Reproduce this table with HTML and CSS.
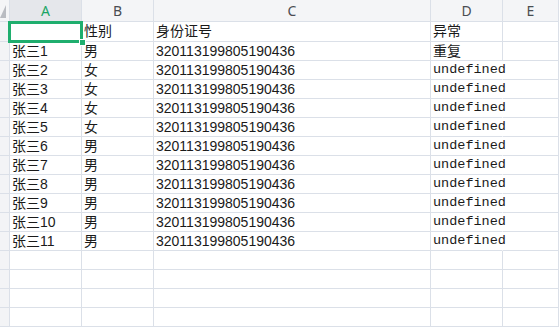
FILE: index.html
```html
<!DOCTYPE html>
<html lang="zh-CN">
<head>
    <meta charset="UTF-8">
    <meta name="viewport" content="width=device-width, initial-scale=1.0">
    <title>身份证号检查</title>
    <link rel="stylesheet" href="styles.css">
</head>
<body>
    <div class="sheet">
        <div class="row head">
            <div class="cell corner">
                <svg width="9" height="21" viewBox="0 0 9 21"><polygon points="6,5 6,18 0,18" fill="#b9bcc2"/></svg>
            </div>
            <div class="cell col active-col">A</div>
            <div class="cell col">B</div>
            <div class="cell col">C</div>
            <div class="cell col">D</div>
            <div class="cell col">E</div>
        </div>
        <div class="row first">
            <div class="cell num"></div>
            <div class="cell active"></div>
            <div class="cell">性别</div>
            <div class="cell">身份证号</div>
            <div class="cell">异常</div>
            <div class="cell"></div>
        </div>
        <div class="row">
            <div class="cell num"></div>
            <div class="cell">张三1</div>
            <div class="cell">男</div>
            <div class="cell">320113199805190436</div>
            <div class="cell">重复</div>
            <div class="cell"></div>
        </div>
        <div class="row">
            <div class="cell num"></div>
            <div class="cell">张三2</div>
            <div class="cell">女</div>
            <div class="cell">320113199805190436</div>
            <div class="cell spill">undefined</div>
            <div class="cell"></div>
        </div>
        <div class="row">
            <div class="cell num"></div>
            <div class="cell">张三3</div>
            <div class="cell">女</div>
            <div class="cell">320113199805190436</div>
            <div class="cell spill">undefined</div>
            <div class="cell"></div>
        </div>
        <div class="row">
            <div class="cell num"></div>
            <div class="cell">张三4</div>
            <div class="cell">女</div>
            <div class="cell">320113199805190436</div>
            <div class="cell spill">undefined</div>
            <div class="cell"></div>
        </div>
        <div class="row">
            <div class="cell num"></div>
            <div class="cell">张三5</div>
            <div class="cell">女</div>
            <div class="cell">320113199805190436</div>
            <div class="cell spill">undefined</div>
            <div class="cell"></div>
        </div>
        <div class="row">
            <div class="cell num"></div>
            <div class="cell">张三6</div>
            <div class="cell">男</div>
            <div class="cell">320113199805190436</div>
            <div class="cell spill">undefined</div>
            <div class="cell"></div>
        </div>
        <div class="row">
            <div class="cell num"></div>
            <div class="cell">张三7</div>
            <div class="cell">男</div>
            <div class="cell">320113199805190436</div>
            <div class="cell spill">undefined</div>
            <div class="cell"></div>
        </div>
        <div class="row">
            <div class="cell num"></div>
            <div class="cell">张三8</div>
            <div class="cell">男</div>
            <div class="cell">320113199805190436</div>
            <div class="cell spill">undefined</div>
            <div class="cell"></div>
        </div>
        <div class="row">
            <div class="cell num"></div>
            <div class="cell">张三9</div>
            <div class="cell">男</div>
            <div class="cell">320113199805190436</div>
            <div class="cell spill">undefined</div>
            <div class="cell"></div>
        </div>
        <div class="row">
            <div class="cell num"></div>
            <div class="cell">张三10</div>
            <div class="cell">男</div>
            <div class="cell">320113199805190436</div>
            <div class="cell spill">undefined</div>
            <div class="cell"></div>
        </div>
        <div class="row">
            <div class="cell num"></div>
            <div class="cell">张三11</div>
            <div class="cell">男</div>
            <div class="cell">320113199805190436</div>
            <div class="cell spill">undefined</div>
            <div class="cell"></div>
        </div>
        <div class="row">
            <div class="cell num"></div>
            <div class="cell"></div>
            <div class="cell"></div>
            <div class="cell"></div>
            <div class="cell"></div>
            <div class="cell"></div>
        </div>
        <div class="row">
            <div class="cell num"></div>
            <div class="cell"></div>
            <div class="cell"></div>
            <div class="cell"></div>
            <div class="cell"></div>
            <div class="cell"></div>
        </div>
        <div class="row">
            <div class="cell num"></div>
            <div class="cell"></div>
            <div class="cell"></div>
            <div class="cell"></div>
            <div class="cell"></div>
            <div class="cell"></div>
        </div>
        <div class="row">
            <div class="cell num"></div>
            <div class="cell"></div>
            <div class="cell"></div>
            <div class="cell"></div>
            <div class="cell"></div>
            <div class="cell"></div>
        </div>
    </div>
</body>
</html>
```

FILE: styles.css
```css
body {
    margin: 0;
    padding: 0;
    background-color: #ffffff;
    font-family: 'Liberation Sans', 'Noto Sans CJK SC', sans-serif;
    font-size: 14px;
    color: #1a1a1a;
    overflow: hidden;
}
.sheet {
    display: flex;
    flex-direction: column;
}
.row {
    display: grid;
    grid-template-columns: 10px 72px 72px 277px 72px 1fr;
    height: 19px;
}
.row.head {
    height: 22px;
    background-color: #f4f5f7;
}
.row.first {
    height: 20px;
}
.cell {
    box-sizing: border-box;
    border-right: 1px solid #dbe0e8;
    border-bottom: 1px solid #dbe0e8;
    padding-left: 2px;
    line-height: 18px;
    white-space: nowrap;
    position: relative;
}
.corner {
    padding: 0;
    line-height: 0;
    overflow: hidden;
}
.col {
    padding: 0;
    text-align: center;
    line-height: 21px;
    font-family: 'Noto Sans', 'Liberation Sans', sans-serif;
    font-size: 14px;
    color: #4a4d52;
}
.active-col {
    background-color: #e5e7eb;
    color: #1aa566;
}
.num {
    background-color: #f3f4f6;
    padding: 0;
}
.spill {
    border-right-color: transparent;
    font-family: 'Liberation Mono', monospace;
    font-size: 13.5px;
    overflow: visible;
}
/* selected cell outline and fill handle */
.active::before {
    content: '';
    position: absolute;
    left: -2px;
    top: -1px;
    width: 75px;
    height: 22px;
    box-sizing: border-box;
    border: 3px solid #1fae6e;
    z-index: 2;
}
.active::after {
    content: '';
    position: absolute;
    left: 69px;
    top: 17px;
    width: 5px;
    height: 5px;
    background-color: #1fae6e;
    border: 1px solid #ffffff;
    z-index: 3;
}
```
